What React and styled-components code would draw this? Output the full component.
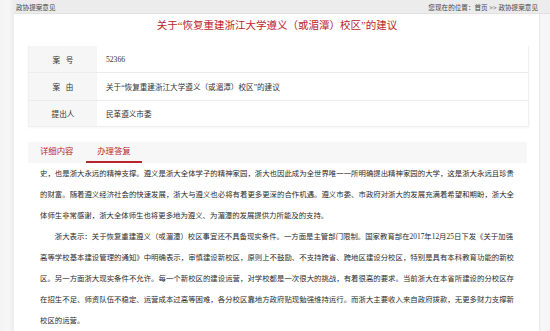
import React from 'react'
import styled, {createGlobalStyle} from "styled-components";

const GlobalStyle = createGlobalStyle`
    html, body {
        margin: 0;
        padding: 0;
        background: #f1f1f1;
        font-family: "Liberation Serif", "Noto Sans CJK SC", serif;
        color: #333;
    }
`;

const Page = styled.div`
    width: 550px;
    height: 331px;
    overflow: hidden;
    display: flex;
    background: linear-gradient(90deg, #f3f3f3 0px, #f7f7f7 8px, #ececec 14px, #f6f6f6 14px);
`;

const Main = styled.div`
    margin-left: 14px;
    flex: 1;
    display: flex;
    flex-direction: column;
`;

const Header = styled.header`
    height: 18px;
    display: flex;
    align-items: center;
    justify-content: space-between;
    padding: 0 12px 0 2px;
    background: #ececec;
    border-bottom: 1px solid #e2e2e2;
    box-sizing: border-box;
    font-size: 6.6px;
    color: #444;
`;

const Panel = styled.section`
    width: 526px;
    flex: 1;
    background: #fff;
    border-right: 1px solid #e8e8e8;
    box-sizing: border-box;
    padding: 0 13px 0 14px;
`;

const Title = styled.h1`
    margin: 0 0 8px;
    height: 24px;
    line-height: 24px;
    text-align: center;
    font-size: 10.5px;
    font-weight: normal;
    color: #b8262c;
`;

const InfoTable = styled.div`
    width: 499px;
    border: 1px solid #f0f0f0;
    border-top: none;
    box-shadow: 0 1px 2px rgba(0, 0, 0, 0.04);
`;

const Row = styled.div`
    display: grid;
    grid-template-columns: 68px 1fr;
    height: ${props => props.h}px;
    border-bottom: 1px solid #ececec;
    font-size: 7.6px;

    &:last-child {
        border-bottom: none;
    }
`;

const Label = styled.div`
    display: flex;
    align-items: center;
    justify-content: center;
    background: #f6f6f6;
    white-space: pre;
`;

const Value = styled.div`
    display: flex;
    align-items: center;
    padding-left: 9px;
`;

const TabBar = styled.div`
    margin-top: 15px;
    width: 499px;
    height: 21px;
    display: flex;
    background: #f7f7f7;
    padding-left: 12px;
    box-sizing: border-box;
`;

const Tab = styled.div`
    width: ${props => props.active ? 56 : 36}px;
    margin-right: 10px;
    font-size: 8.4px;
    color: #b8262c;
    line-height: 19px;
    text-align: ${props => props.active ? "center" : "left"};
    border-bottom: 2px solid ${props => props.active ? "#b8262c" : "transparent"};
`;

const Content = styled.div`
    width: 474px;
    padding-left: 12px;
    font-size: 7.4px;
    line-height: 21px;
    text-align: justify;
    color: #2b2b2b;

    p {
        margin: 0;
    }
`;

const Indent = styled.p`
    text-indent: 2em;
`;

const App = () => {
    return (
        <>
            <GlobalStyle/>
            <Page>
                <Main>
                    <Header>
                        <span>政协提案意见</span>
                        <span>您现在的位置：首页 &gt;&gt; 政协提案意见</span>
                    </Header>
                    <Panel>
                        <Title>关于“恢复重建浙江大学遵义（或湄潭）校区”的建议</Title>
                        <InfoTable>
                            <Row h={26}><Label>{"案   号"}</Label><Value>52366</Value></Row>
                            <Row h={27}><Label>{"案   由"}</Label><Value>关于“恢复重建浙江大学遵义（或湄潭）校区”的建议</Value></Row>
                            <Row h={25}><Label>提出人</Label><Value>民革遵义市委</Value></Row>
                        </InfoTable>
                        <TabBar>
                            <Tab>详细内容</Tab>
                            <Tab active>办理答复</Tab>
                        </TabBar>
                        <Content>
                            <p>史，也是浙大永远的精神支撑。遵义是浙大全体学子的精神家园，浙大也因此成为全世界唯一一所明确提出精神家园的大学，这是浙大永远且珍贵的财富。随着遵义经济社会的快速发展，浙大与遵义也必将有着更多更深的合作机遇。遵义市委、市政府对浙大的发展充满着希望和期盼，浙大全体师生非常感谢，浙大全体师生也将更多地为遵义、为湄潭的发展提供力所能及的支持。</p>
                            <Indent>浙大表示：关于恢复重建遵义（或湄潭）校区事宜还不具备现实条件。一方面是主管部门限制。国家教育部在2017年12月25日下发《关于加强<br/>高等学校基本建设管理的通知》中明确表示，审慎建设新校区，原则上不鼓励、不支持跨省、跨地区建设分校区，特别是具有本科教育功能的新校区。另一方面浙大现实条件不允许。每一个新校区的建设运营，对学校都是一次很大的挑战，有着很高的要求。当前浙大在本省所建设的分校区存在招生不足、师资队伍不稳定、运营成本过高等困难，各分校区靠地方政府贴现勉强维持运行。而浙大主要收入来自政府拨款，无更多财力支撑新校区的运营。</Indent>
                        </Content>
                    </Panel>
                </Main>
            </Page>
        </>
    )
}

export default App;
